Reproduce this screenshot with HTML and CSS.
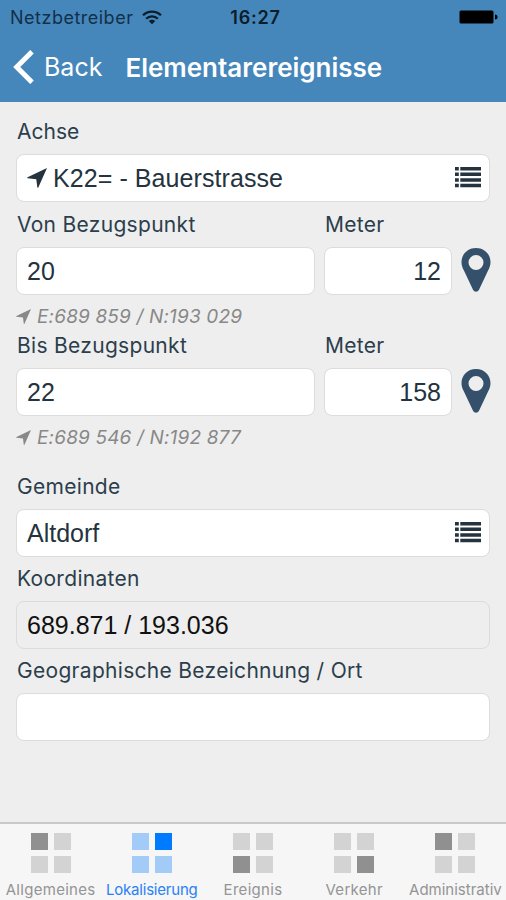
FILE: index.html
```html
<!DOCTYPE html>
<html lang="de">
<head>
<meta charset="utf-8">
<title>Elementarereignisse</title>
<link rel="stylesheet" href="styles.css">
</head>
<body>
<svg class="defs" aria-hidden="true">
  <symbol id="arrow" viewBox="0 0 20 20"><path d="M20 0 11.300 19.500Q10.700 20.300 10.300 19.300L9.300 11.300.8 10.300Q-.4 9.800.6 9.200Z"/></symbol>
  <symbol id="list" viewBox="0 0 26 21"><path d="M0 0h3.800v3.500H0zM5.300 0H26v3.500H5.300zM0 5.600h3.800v3.500H0zM5.300 5.600H26v3.500H5.300zM0 11.200h3.800v3.500H0zM5.300 11.200H26v3.500H5.300zM0 16.800h3.800v3.500H0zM5.300 16.800H26v3.500H5.300z"/></symbol>
  <symbol id="pin" viewBox="0 0 30 44"><path fill-rule="evenodd" d="M15 0C6.500 0 .5 6.300.5 14.200c0 3.300 1 5.400 2.300 8.100L12 41.800c1.200 2.600 4.800 2.600 6 0l9.200-19.500c1.300-2.700 2.300-4.800 2.300-8.100C29.500 6.300 23.500 0 15 0Zm0 7a7.500 7.500 0 1 1 0 15 7.500 7.500 0 0 1 0-15Z"/></symbol>
</svg>
<header class="header">
  <div class="status">
    <div class="carrier"><span>Netzbetreiber</span>
      <svg class="wifi" viewBox="0 0 20 15"><path d="M1 5.300a12.700 12.700 0 0 1 18 0M4.200 8.700a8.200 8.200 0 0 1 11.600 0" fill="none" stroke="currentColor" stroke-width="2.300"/><path d="M6.800 11a4.600 4.600 0 0 1 6.400 0L10 14.300Z"/></svg>
    </div>
    <div class="time">16:27</div>
    <svg class="battery" viewBox="0 0 39 14"><rect x=".5" y=".5" width="34" height="13" rx="1.500"/><path d="M36 4.500q2.500 0 2.500 2.500T36 9.500z"/></svg>
  </div>
  <div class="nav">
    <svg class="chevron" viewBox="0 0 21 34"><path d="M19 1.700 3.700 17 19 32.300" fill="none" stroke="currentColor" stroke-width="5"/></svg>
    <span class="back">Back</span>
    <h1 class="title">Elementarereignisse</h1>
  </div>
</header>
<main class="form">
  <div class="label short">Achse</div>
  <div class="field"><svg class="arrow"><use href="#arrow"/></svg><span class="street">K22= - Bauerstrasse</span><svg class="list"><use href="#list"/></svg></div>
  <div class="point">
    <div class="label">Von Bezugspunkt</div><div class="label">Meter</div>
    <div class="field">20</div><div class="field number">12</div><svg class="pin"><use href="#pin"/></svg>
  </div>
  <div class="hint"><svg class="hint-arrow"><use href="#arrow"/></svg><span>E:689 859 / N:193 029</span></div>
  <div class="point">
    <div class="label">Bis Bezugspunkt</div><div class="label">Meter</div>
    <div class="field">22</div><div class="field number">158</div><svg class="pin"><use href="#pin"/></svg>
  </div>
  <div class="hint last"><svg class="hint-arrow"><use href="#arrow"/></svg><span>E:689 546 / N:192 877</span></div>
  <div class="label">Gemeinde</div>
  <div class="field"><span>Altdorf</span><svg class="list"><use href="#list"/></svg></div>
  <div class="label tight">Koordinaten</div>
  <div class="field readonly">689.871 / 193.036</div>
  <div class="label tight">Geographische Bezeichnung / Ort</div>
  <div class="field"></div>
</main>
<nav class="tabs">
  <div class="tab"><div class="squares"><i class="on"></i><i></i><i></i><i></i></div><span class="wide">Allgemeines</span></div>
  <div class="tab active"><div class="squares"><i></i><i class="on"></i><i></i><i></i></div><span class="narrow">Lokalisierung</span></div>
  <div class="tab"><div class="squares"><i></i><i></i><i class="on"></i><i></i></div><span class="wide">Ereignis</span></div>
  <div class="tab"><div class="squares"><i></i><i></i><i></i><i class="on"></i></div><span class="wide">Verkehr</span></div>
  <div class="tab"><div class="squares"><i class="on"></i><i></i><i></i><i></i></div><span>Administrativ</span></div>
</nav>
</body>
</html>
```
FILE: styles.css
```css
* { box-sizing: border-box; }
body {
  margin: 0;
  height: 900px;
  display: flex;
  flex-direction: column;
  overflow: hidden;
  background: #eee;
  color: #2c3e4c;
  font-family: Inter, "Liberation Sans", sans-serif;
}
svg { display: block; flex: none; fill: currentColor; }
.defs { display: none; }

.header { height: 102px; background: #4587ba; }
.status {
  height: 34px;
  padding: 0 8px 0 10px;
  display: grid;
  grid-template-columns: 1fr auto 1fr;
  align-items: center;
  color: #0b1c2a;
}
.carrier { display: flex; align-items: center; gap: 9px; font-size: 18px; letter-spacing: 0.5px; color: #12304a; }
.wifi { width: 20px; height: 15px; color: #0b1c2a; }
.time { padding-left: 3px; font-size: 18px; font-weight: 600; letter-spacing: 0.8px; }
.battery { width: 39px; height: 14px; justify-self: end; color: #000; }
.nav { height: 66px; display: flex; align-items: center; padding-left: 13px; color: #fff; }
.chevron { width: 21px; height: 34px; }
.back { margin-left: 10px; font-size: 25px; }
.title { margin: 0 0 0 23px; font-size: 26px; font-weight: 600; }

.form { flex: 1; padding: 7px 16px 0; }
.label { height: 45px; padding-left: 1px; line-height: 45px; font-size: 21px; letter-spacing: 0.3px; white-space: nowrap; }
.short { letter-spacing: 0; }
.tight { height: 44px; line-height: 44px; }
.field {
  height: 48px;
  padding: 0 8px 0 10px;
  display: flex;
  align-items: center;
  background: #fff;
  border: 1px solid #dcdcdc;
  border-radius: 8px;
  color: #24333e;
  font-family: "Liberation Sans", Arial, sans-serif;
  font-size: 25px;
}
.street { letter-spacing: 0.08px; }
.number { justify-content: flex-end; padding-right: 10px; }
.readonly { background: #eee; color: #111; }
.arrow { width: 20px; height: 20px; margin-right: 6px; }
.list { width: 26px; height: 21px; margin: 0 0 2px auto; }
.point { display: grid; grid-template-columns: 299px 128px 30px; column-gap: 9px; }
.point > .label:nth-child(2) { grid-column: 2 / 4; }
.pin { width: 30px; height: 44px; margin-top: 1px; color: #34506a; }
.hint {
  height: 28px;
  padding-top: 14px;
  display: flex;
  align-items: center;
  gap: 6px;
  color: #888;
  font-size: 19px;
  font-style: italic;
  letter-spacing: 0.16px;
}
.hint-arrow { width: 15px; height: 15px; }
.last { margin-bottom: 20px; }

.tabs {
  height: 78px;
  display: grid;
  grid-template-columns: repeat(5, 1fr);
  background: #f6f6f6;
  border-top: 2px solid #c9c9c9;
  color: #949494;
}
.tab { padding-top: 9px; display: flex; flex-direction: column; align-items: center; gap: 7px; font-size: 15px; }
.wide { letter-spacing: 0.3px; }
.narrow { letter-spacing: -0.2px; }
.squares { display: grid; grid-template-columns: 17px 17px; grid-auto-rows: 17px; gap: 6px; }
.squares i { background: #d3d3d3; }
.squares .on { background: #909090; }
.active { color: #2a80f5; }
.active .squares i { background: #a2cbf8; }
.active .squares .on { background: #007aff; }
```
